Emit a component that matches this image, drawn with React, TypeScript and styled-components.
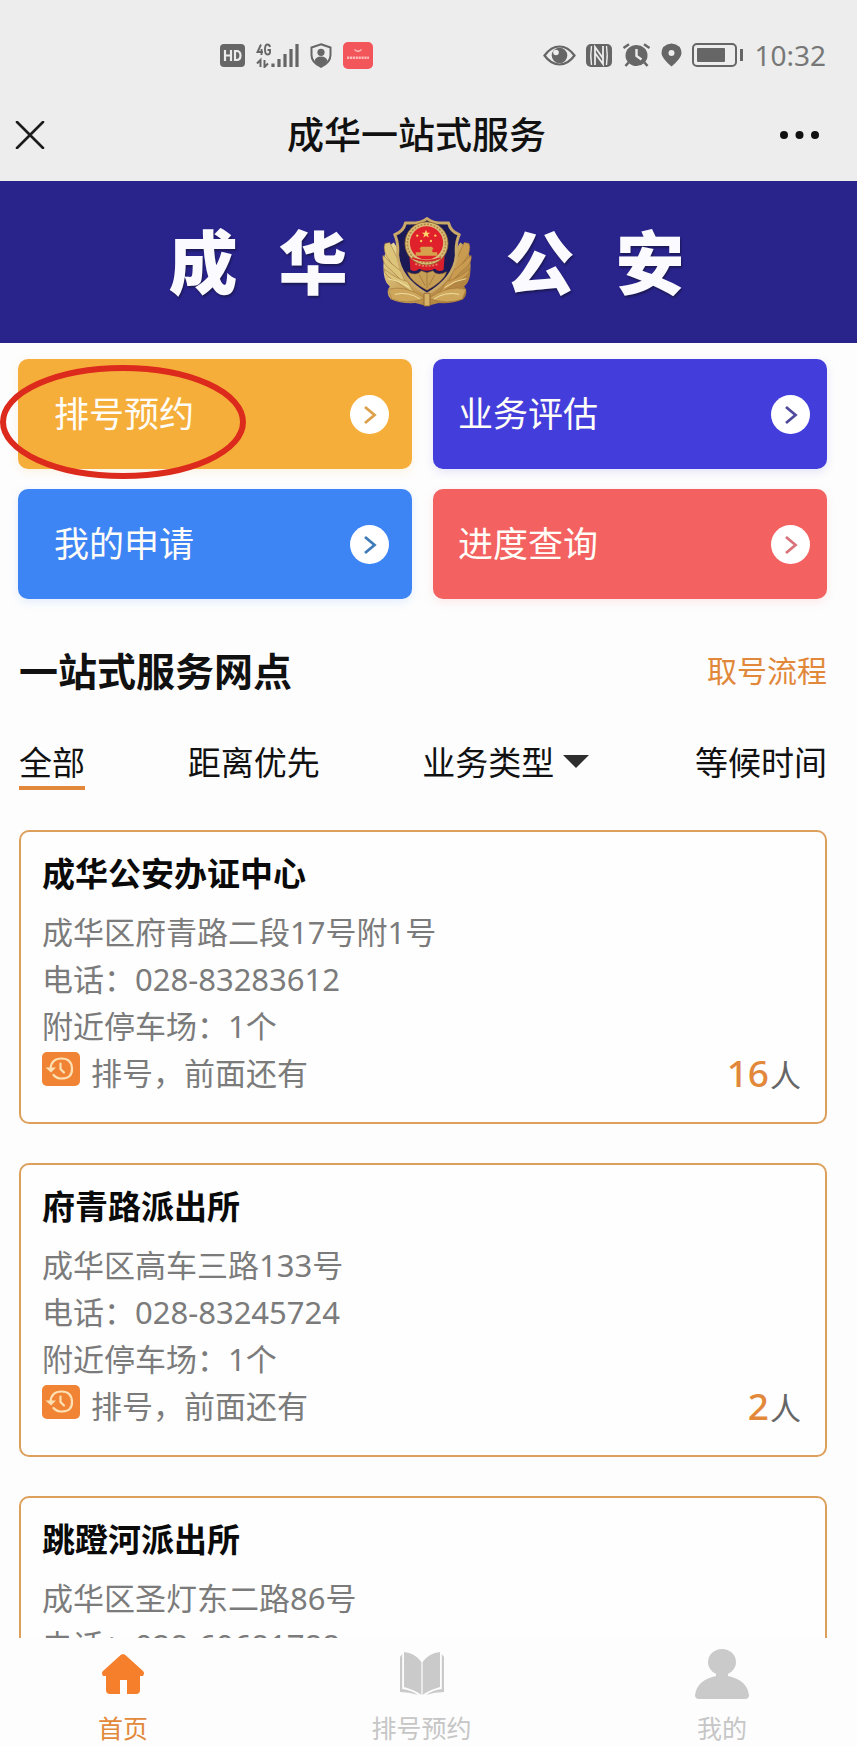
import React, { useState } from "react";
import styled, { createGlobalStyle } from "styled-components";

const GlobalStyle = createGlobalStyle`
  * { box-sizing: border-box; }
  body {
    margin: 0;
    background: #fdfdfd;
    color: #111;
    font-family: "Noto Sans", "Noto Sans CJK SC", sans-serif;
  }
  h1, h2, h3, p, ul { margin: 0; padding: 0; }
  ul { list-style: none; }
  button, select {
    margin: 0;
    padding: 0;
    border: 0;
    background: none;
    color: inherit;
    font: inherit;
    cursor: pointer;
  }
  a { color: inherit; text-decoration: none; }
  svg { display: block; flex: none; }
`;

const Shell = styled.div`
  display: flex;
  flex-direction: column;
  height: 100vh;
`;

/* ---------- top bars ---------- */

const Top = styled.header`
  flex: none;
  background: #ededed;
`;

const StatusBar = styled.div`
  display: flex;
  align-items: center;
  justify-content: space-between;
  height: 85px;
  padding: 25px 31px 0 220px;
  color: #666;
`;

const StatusGroup = styled.div<{ $gap: number }>`
  display: flex;
  align-items: center;
  gap: ${(p) => p.$gap}px;
`;

const Clock = styled.time`
  font-size: 28px;
  line-height: 32px;
  color: #777;
`;

const TitleBar = styled.div`
  display: flex;
  align-items: center;
  justify-content: space-between;
  height: 96px;
  padding: 4px 39px 0 15px;
`;

const PageTitle = styled.h1`
  font-size: 37px;
  line-height: 48px;
  font-weight: 500;
`;

const BarButton = styled.button`
  display: flex;
  align-items: center;
  width: 38px;
  height: 48px;
`;

/* ---------- content ---------- */

const Scroller = styled.main`
  flex: 1;
  min-height: 0;
  overflow-y: auto;
  scrollbar-width: none;
`;

const Banner = styled.div`
  display: flex;
  align-items: center;
  justify-content: center;
  gap: 34px;
  height: 162px;
  padding-right: 4px;
  background: #29238c;
`;

const BannerWord = styled.span`
  display: flex;
  gap: 41px;
  font-size: 69px;
  line-height: 80px;
  font-weight: 900;
  color: #fbfbff;
  text-shadow: 1px 2px 2px rgba(20, 20, 50, 0.6);
`;

const Content = styled.div`
  padding: 16px 30px 40px 18px;
`;

const Actions = styled.nav`
  display: grid;
  grid-template-columns: 1fr 1fr;
  gap: 20px 21px;
`;

const Action = styled.button<{ $color: string; $start: number; $end: number }>`
  position: relative;
  display: flex;
  align-items: center;
  justify-content: space-between;
  height: 110px;
  padding: 0 ${(p) => p.$end}px 0 ${(p) => p.$start}px;
  border-radius: 10px;
  background: ${(p) => p.$color};
  box-shadow: 0 3px 10px ${(p) => p.$color}22;
  color: #fffdf8;
  font-size: 35px;
  line-height: 48px;
`;

const Ring = styled.svg`
  position: absolute;
  left: -18px;
  top: 5px;
  pointer-events: none;
`;

const Branches = styled.section`
  margin-top: 48px;
  padding-left: 1px;
`;

const SectionHead = styled.div`
  display: flex;
  align-items: center;
  justify-content: space-between;
`;

const SectionTitle = styled.h2`
  font-size: 39px;
  line-height: 48px;
  font-weight: 700;
`;

const FlowLink = styled.a`
  font-size: 30px;
  line-height: 48px;
  color: #e2883a;
`;

const Filters = styled.div`
  display: flex;
  justify-content: space-between;
  margin-top: 46px;
  font-size: 33px;
  line-height: 44px;
`;

const Filter = styled.button<{ $active: boolean }>`
  padding-bottom: 1px;
  border-bottom: 4px solid ${(p) => (p.$active ? "#e2883a" : "transparent")};
`;

const TypeFilter = styled.label`
  position: relative;
`;

const TypeSelect = styled.select`
  appearance: none;
  height: 44px;
  padding-right: 38px;
  line-height: 44px;
`;

const Caret = styled.svg`
  position: absolute;
  right: 3px;
  top: 14px;
  pointer-events: none;
`;

const Stations = styled.ul`
  display: flex;
  flex-direction: column;
  gap: 39px;
  margin-top: 40px;
`;

const Station = styled.li`
  padding: 18px 24px 25px 21px;
  border: 2px solid #dda05c;
  border-radius: 10px;
  background: #fefefe;
`;

const StationName = styled.h3`
  margin-bottom: 11px;
  font-size: 33px;
  line-height: 48px;
  font-weight: 700;
  color: #0a0a0a;
`;

const Line = styled.p`
  font-size: 31px;
  line-height: 47px;
  color: #7b7b7b;
`;

const QueueRow = styled.div`
  display: flex;
  align-items: center;
  justify-content: space-between;
  height: 47px;
`;

const QueueLabel = styled.div`
  display: flex;
  align-items: flex-start;
  gap: 11px;

  svg { margin-top: 2px; }
`;

const People = styled(Line)`
  display: flex;
  align-items: baseline;
  gap: 1px;
  color: #666;
`;

const Count = styled.strong`
  font-size: 37px;
  line-height: 47px;
  font-weight: 500;
  color: #e2883a;
`;

/* ---------- bottom tabs ---------- */

const TabBar = styled.nav`
  display: flex;
  flex: none;
  justify-content: space-between;
  padding: 11px 108px 0 98px;
  background: #fdfdfd;
`;

const Tab = styled.a<{ $active?: boolean }>`
  display: flex;
  flex-direction: column;
  align-items: center;
  gap: 11px;
  font-size: 25px;
  line-height: 36px;
  color: ${(p) => (p.$active ? "#e2883a" : "#c6c6c6")};
`;

/* ---------- drawings ---------- */

const HdIcon = () => (
  <svg width="25" height="23" viewBox="0 0 25 23">
    <rect width="25" height="23" rx="4" fill="#666" />
    <path d="M5 6v11M11 6v11M5 11.500h6M15 7v9h1.500q4 0 4-4.500t-4-4.500z" fill="none" stroke="#ededed" strokeWidth="2.200" />
  </svg>
);

const SignalIcon = () => (
  <svg width="43" height="25" viewBox="0 0 43 25" fill="none" stroke="#666">
    <path d="M5 1.500 1.500 9H7M5.500 6v6M14 4q-.5-2.500-2.500-2.500Q9 1.500 9 6.500T11.500 11.500q2.500 0 2.500-2.500V7h-2.500" strokeWidth="1.900" />
    <path d="M4.500 24v-7L1 20.500M8.500 17v7l3.500-3.500" strokeWidth="2" />
    <path d="M17 20.500V24M23 16v8M29 11v13M35 6v18M41 1v23" strokeWidth="3.200" />
  </svg>
);

const ShieldIcon = () => (
  <svg width="22" height="25" viewBox="0 0 22 25">
    <path d="M11 1.200 20.500 4.500V12q0 7.500-9.500 11.800Q1.500 19.500 1.500 12V4.500z" fill="none" stroke="#666" strokeWidth="2" />
    <circle cx="11" cy="9.300" r="3.600" fill="#666" />
    <path d="M4.500 18q1-4.500 6.500-4.500t6.500 4.500Q15 21.500 11 23.500 7 21.500 4.500 18z" fill="#666" />
  </svg>
);

const RedAppIcon = () => (
  <svg width="30" height="27" viewBox="0 0 30 27">
    <rect width="30" height="27" rx="5" fill="#f2555a" />
    <path d="M11.500 7.500q3.500 3.500 7 0" fill="none" stroke="#ffc0c0" strokeWidth="1.300" />
    <path d="M4 15.800h22" stroke="#ffb9b9" strokeWidth="2.600" strokeDasharray="2.200 .7" />
  </svg>
);

const EyeIcon = () => (
  <svg width="33" height="21" viewBox="0 0 33 21">
    <path d="M1.500 10.500Q8 1.500 16.500 1.500t15 9q-6.500 9-15 9t-15-9z" fill="none" stroke="#666" strokeWidth="2.200" />
    <circle cx="16.500" cy="10.500" r="7.800" fill="#666" />
    <circle cx="13" cy="7.500" r="2.800" fill="#ededed" />
  </svg>
);

const NfcIcon = () => (
  <svg width="26" height="23" viewBox="0 0 26 23">
    <rect width="26" height="23" rx="5" fill="#666" />
    <path d="M5.500 21Q4 11.500 5.500 2M20.500 2q1.500 9.500 0 19" fill="none" stroke="#ededed" strokeWidth="1.400" />
    <path d="M9 21V3L17.500 15M17 2v18L9 9" fill="none" stroke="#ededed" strokeWidth="1.800" />
  </svg>
);

const AlarmIcon = () => (
  <svg width="29" height="24" viewBox="0 0 29 24">
    <path d="M1.500 5 7 1.200M27.500 5 22 1.200" stroke="#666" strokeWidth="2.400" />
    <path d="M6.500 19.500 3.500 23M22.500 19.500l3 3.500" stroke="#666" strokeWidth="2.600" />
    <ellipse cx="14.500" cy="12.500" rx="11" ry="10.500" fill="#666" />
    <path d="M14.500 6v7l5 3.500" fill="none" stroke="#ededed" strokeWidth="2.400" />
  </svg>
);

const PinIcon = () => (
  <svg width="21" height="24" viewBox="0 0 21 24">
    <path fillRule="evenodd" fill="#666" d="M10.500.5q10 1 10 10Q20 15.500 10.500 23.500 1 15.500.5 10.500q0-9 10-10zM10.500 7a3 3 0 1 0 0 6 3 3 0 0 0 0-6z" />
  </svg>
);

const BatteryIcon = () => (
  <svg width="52" height="24" viewBox="0 0 52 24">
    <rect x="1" y="1" width="43" height="22" rx="4" fill="none" stroke="#666" strokeWidth="2" />
    <rect x="5" y="5" width="28" height="14" rx="1" fill="#666" />
    <rect x="48" y="6" width="3" height="12" fill="#666" />
  </svg>
);

const CloseIcon = () => (
  <svg width="30" height="28" viewBox="0 0 30 28">
    <path d="M2 1 28 27M28 1 2 27" stroke="#1c1c1c" strokeWidth="2.600" strokeLinecap="round" />
  </svg>
);

const MoreIcon = () => (
  <svg width="39" height="8" viewBox="0 0 39 8" fill="#111">
    <circle cx="4" cy="4" r="4" />
    <circle cx="19.500" cy="4" r="4" />
    <circle cx="35" cy="4" r="4" />
  </svg>
);

const FEATHERS = [
  "M15 40Q12 48 20 58L32 76 29 58Q22 44 20 39z",
  "M13 52Q11 60 22 68L38 84 31 68Q20 60 13 52z",
  "M14 66Q15 74 28 80L46 92 38 79Q26 76 14 66z",
];

const Emblem = () => (
  <svg width="90" height="90" viewBox="12 13 92 92" role="img" aria-label="警徽">
    <defs>
      <linearGradient id="gold" x1="0" y1="0" x2="1" y2="1">
        <stop offset="0" stopColor="#eadf9f" />
        <stop offset="0.500" stopColor="#c8a25a" />
        <stop offset="1" stopColor="#a06e2c" />
      </linearGradient>
    </defs>
    <path d="M24 39Q11 46 14 72 15 80 20 84 15 90 21 97 32 102 46 101L58 104 70 101Q84 102 95 97 101 90 96 84 101 80 102 72 105 46 92 39L58 90z" fill="url(#gold)" />
    {[false, true].map((mirror) => (
      <g key={String(mirror)} transform={mirror ? "translate(116 0) scale(-1 1)" : undefined}>
        {FEATHERS.map((d) => (
          <path key={d} d={d} fill={mirror ? "#c99b51" : "#dcc47b"} stroke="#94672c" strokeOpacity="0.600" strokeWidth="0.800" />
        ))}
        <path d="M18 87Q36 82 56 96 38 103 22 97z" fill="#cda65c" stroke="#94672c" strokeOpacity="0.600" strokeWidth="0.800" />
        <path d="M25 92q15-3 26 5M18 76q12 2 22 9" fill="none" stroke="#f0dfa0" strokeWidth="1" />
      </g>
    ))}
    <path d="M58 14.500Q64 20 80 19 82 28 91 31 87 39 88 52 86 76 58 92 30 76 28 52 29 39 25 31 34 28 36 19 52 20 58 14.500z" fill="#1c1a56" stroke="#c9a868" strokeWidth="3" strokeLinejoin="round" />
    <path d="M38 69Q47 74 52 68L58 70 64 68Q69 74 78 69 76 78 58 88 40 78 38 69z" fill="#c79e55" stroke="#8d622c" strokeOpacity="0.700" strokeWidth="0.800" />
    <path d="M58 70v16M50 72l6 11M66 72l-6 11" stroke="#8d622c" strokeOpacity="0.700" strokeWidth="0.800" />
    <path d="M40 52q18 8 36 0l-1 15q-5 3-9-1-8 4-16 0-4 4-9 1z" fill="#d8202c" />
    <path d="M46 61q12 4 24 0" fill="none" stroke="#f07c62" strokeWidth="1.800" strokeDasharray="2 1.500" />
    <circle cx="57.500" cy="40" r="22" fill="#d9bd78" stroke="#93662b" strokeWidth="0.800" />
    <circle cx="57.500" cy="40" r="19.500" fill="none" stroke="#b18642" strokeWidth="1.600" strokeDasharray="2 1.400" />
    <circle cx="57.500" cy="39.500" r="17" fill="#e0202a" />
    <path d="m57 26 1.200 3h3.200l-2.600 2 1 3-2.800-1.800-2.800 1.800 1-3-2.600-2h3.200z" fill="#ffd66b" />
    <g fill="#ffc45a">
      <circle cx="48" cy="32" r="1.200" />
      <circle cx="66.500" cy="32" r="1.200" />
      <circle cx="52" cy="37.500" r="1.200" />
      <circle cx="62" cy="37.500" r="1.200" />
    </g>
    <path d="M52 43.500h11l2 2.500h-1.500V49h5v3.500h-22V49h5v-3H50z" fill="#d6a04c" />
    <path d="M43 55q14.500 6 29 0" fill="none" stroke="#d8202c" strokeWidth="1.600" />
    <path d="M55 91h6v13h-6z" fill="#d5b268" stroke="#8d622c" strokeWidth="0.800" />
  </svg>
);

const ArrowBadge = ({ color }: { color: string }) => (
  <svg width="39" height="39" viewBox="0 0 39 39">
    <circle cx="19.500" cy="19.500" r="19.500" fill="#fff" />
    <path d="M15 12 24.500 20 15 28" fill="none" stroke={color} strokeWidth="2.800" />
  </svg>
);

const HistoryIcon = () => (
  <svg width="38" height="34" viewBox="0 0 38 34">
    <rect width="38" height="34" rx="5" fill="#f08434" />
    <g fill="none" stroke="#fde0b4" strokeWidth="2.200" strokeLinecap="round">
      <path d="M8.500 16.500Q9.500 6.500 19.500 6.500T30 16.500 19.500 26.500q-5 0-8-3.500" />
      <path d="M18.500 11.500v5.500l3.500 3.500" />
    </g>
    <path d="M3.500 15.500h10.500L9 20.500z" fill="#fde0b4" />
  </svg>
);

const HomeIcon = () => (
  <svg width="44" height="50" viewBox="0 0 44 50">
    <path d="M22 5Q24 5 26 7.500L42 22Q44 24 42 27H39V41Q39 45 35 45H26V31H19V45H9Q5 45 5 41V27H2Q0 24 2 22L18 7.500Q20 5 22 5z" fill="#f67f2c" />
  </svg>
);

const BookIcon = () => (
  <svg width="46" height="50" viewBox="0 0 46 50">
    <path d="M5 3Q16 4 22.400 13V46Q16 41 5 38zM41 3Q30 4 23.600 13V46Q30 41 41 38z" fill="#cacaca" />
    <path d="M3.200 5V40Q12 41 19 46Q10 43 1 43V8zM42.800 5V40Q34 41 27 46Q36 43 45 43V8z" fill="#cacaca" />
  </svg>
);

const PersonIcon = () => (
  <svg width="54" height="50" viewBox="0 0 54 50">
    <ellipse cx="27" cy="13" rx="14" ry="13" fill="#cacaca" />
    <path d="M21 24H33V27Q52 31 54 46 54 50 50 50H4Q0 50 0 46 2 31 21 27z" fill="#cacaca" />
  </svg>
);

/* ---------- data ---------- */

const ACTIONS = [
  { label: "排号预约", color: "#f6ae3a", arrow: "#dda04a", start: 36, end: 23, ringed: true },
  { label: "业务评估", color: "#433edb", arrow: "#4f4a9c", start: 25, end: 17 },
  { label: "我的申请", color: "#3d84f5", arrow: "#3f7bb8", start: 36, end: 23 },
  { label: "进度查询", color: "#f46161", arrow: "#d9737a", start: 25, end: 17 },
];

const STATIONS = [
  { name: "成华公安办证中心", address: "成华区府青路二段17号附1号", phone: "028-83283612", parking: 1, waiting: 16 },
  { name: "府青路派出所", address: "成华区高车三路133号", phone: "028-83245724", parking: 1, waiting: 2 },
  { name: "跳蹬河派出所", address: "成华区圣灯东二路86号", phone: "028-60681788", parking: 1, waiting: 0 },
];

export default function App() {
  const [filter, setFilter] = useState("全部");

  const filterButton = (label: string) => (
    <Filter type="button" $active={filter === label} onClick={() => setFilter(label)}>
      {label}
    </Filter>
  );

  return (
    <Shell lang="zh-CN">
      <GlobalStyle />
      <Top>
        <StatusBar>
          <StatusGroup $gap={11}>
            <HdIcon />
            <SignalIcon />
            <ShieldIcon />
            <RedAppIcon />
          </StatusGroup>
          <StatusGroup $gap={10}>
            <EyeIcon />
            <NfcIcon />
            <AlarmIcon />
            <PinIcon />
            <BatteryIcon />
            <Clock>10:32</Clock>
          </StatusGroup>
        </StatusBar>
        <TitleBar>
          <BarButton type="button" aria-label="关闭">
            <CloseIcon />
          </BarButton>
          <PageTitle>成华一站式服务</PageTitle>
          <BarButton type="button" aria-label="更多">
            <MoreIcon />
          </BarButton>
        </TitleBar>
      </Top>

      <Scroller>
        <Banner>
          <BannerWord>
            <span>成</span>
            <span>华</span>
          </BannerWord>
          <Emblem />
          <BannerWord>
            <span>公</span>
            <span>安</span>
          </BannerWord>
        </Banner>

        <Content>
          <Actions>
            {ACTIONS.map((a) => (
              <Action key={a.label} type="button" $color={a.color} $start={a.start} $end={a.end}>
                {a.label}
                <ArrowBadge color={a.arrow} />
                {a.ringed && (
                  <Ring width="246" height="116" viewBox="0 0 246 116" aria-hidden="true">
                    <ellipse cx="123" cy="58" rx="120" ry="54" fill="none" stroke="#dc2a1c" strokeWidth="6" />
                  </Ring>
                )}
              </Action>
            ))}
          </Actions>

          <Branches>
            <SectionHead>
              <SectionTitle>一站式服务网点</SectionTitle>
              <FlowLink href="#flow">取号流程</FlowLink>
            </SectionHead>

            <Filters>
              {filterButton("全部")}
              {filterButton("距离优先")}
              <TypeFilter>
                <TypeSelect aria-label="业务类型" defaultValue="业务类型">
                  <option>业务类型</option>
                </TypeSelect>
                <Caret width="26" height="13" viewBox="0 0 26 13" aria-hidden="true">
                  <path d="M0 0H26L13 13z" fill="#2e2e2e" />
                </Caret>
              </TypeFilter>
              {filterButton("等候时间")}
            </Filters>

            <Stations>
              {STATIONS.map((s) => (
                <Station key={s.name}>
                  <StationName>{s.name}</StationName>
                  <Line>{s.address}</Line>
                  <Line>电话：{s.phone}</Line>
                  <Line>附近停车场：{s.parking}个</Line>
                  <QueueRow>
                    <QueueLabel>
                      <HistoryIcon />
                      <Line>排号，前面还有</Line>
                    </QueueLabel>
                    <People>
                      <Count>{s.waiting}</Count>人
                    </People>
                  </QueueRow>
                </Station>
              ))}
            </Stations>
          </Branches>
        </Content>
      </Scroller>

      <TabBar>
        <Tab href="#home" $active aria-current="page">
          <HomeIcon />
          首页
        </Tab>
        <Tab href="#booking">
          <BookIcon />
          排号预约
        </Tab>
        <Tab href="#me">
          <PersonIcon />
          我的
        </Tab>
      </TabBar>
    </Shell>
  );
}
